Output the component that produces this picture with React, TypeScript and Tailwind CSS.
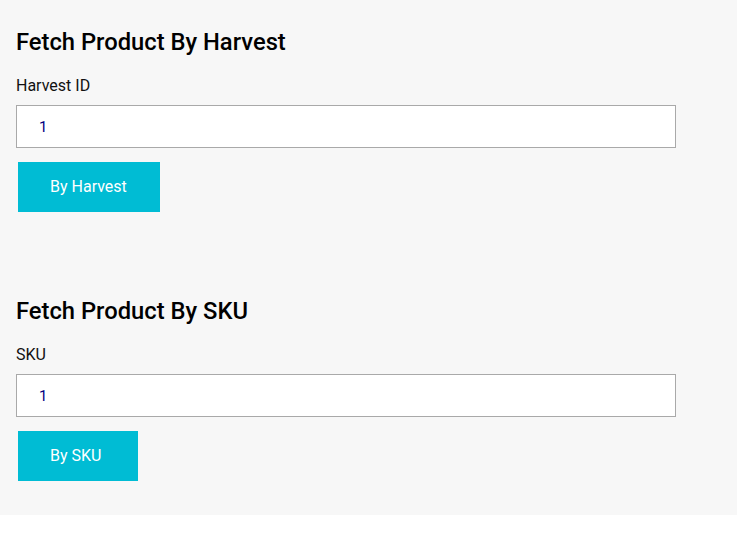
import React, { useState } from 'react';

function FetchSection({ title, label, button, btnWidth }: { title: string; label: string; button: string; btnWidth: string }) {
  const [value, setValue] = useState('1');

  return (
    <div className="flex flex-col items-start">
      <h2 className="text-[23.75px] leading-[28px] font-medium text-black">{title}</h2>
      <label className="mt-[18px] text-[16px] leading-[24px] text-[#111]">{label}</label>
      <input
        type="text"
        value={value}
        onChange={(e) => setValue(e.target.value)}
        className="mt-[7px] w-[660px] h-[43px] bg-white border border-[#a9a9a9] pl-[22px] text-[15px] text-[#000080] font-['Roboto',sans-serif] outline-none"
      />
      <button className={`mt-[14px] ml-[2px] ${btnWidth} bg-[#00bcd4] text-white text-left text-[16px] leading-[24px] pl-[32px] py-[13px]`}>
        {button}
      </button>
    </div>
  );
}

export default function App() {
  return (
    <div className="bg-[#f7f7f7] font-['Roboto',sans-serif] pl-4 pt-[28px] pb-[34px] flex flex-col gap-[85px]">
      <FetchSection title="Fetch Product By Harvest" label="Harvest ID" button="By Harvest" btnWidth="w-[142px]" />
      <FetchSection title="Fetch Product By SKU" label="SKU" button="By SKU" btnWidth="w-[120px]" />
    </div>
  );
}
